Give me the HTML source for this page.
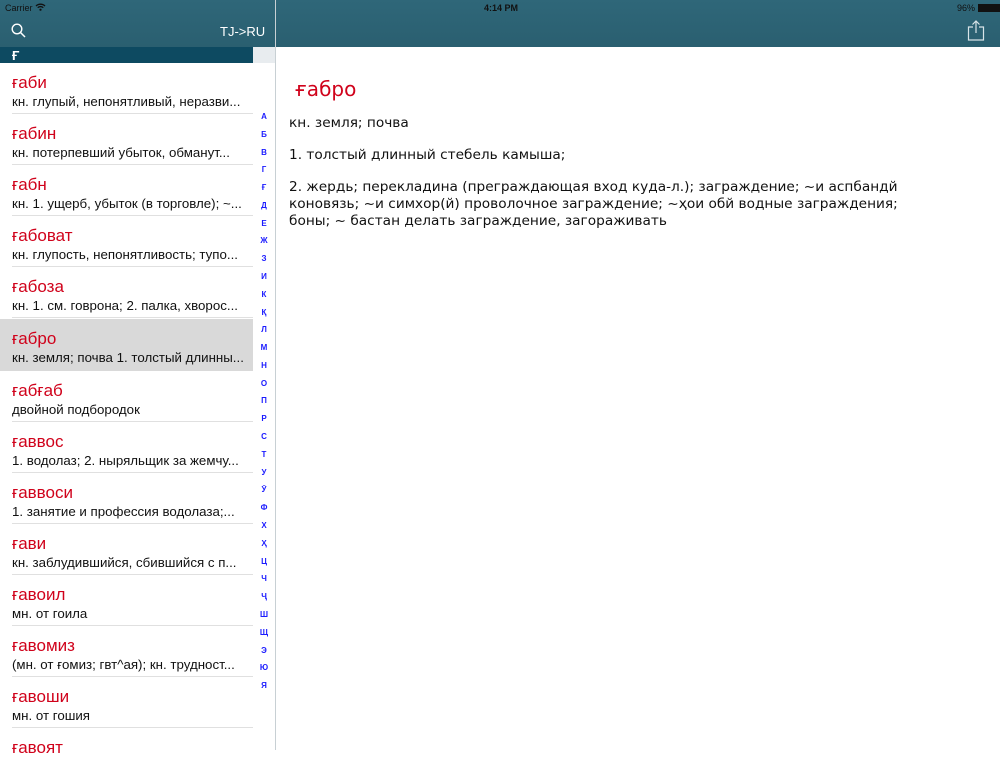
<!DOCTYPE html>
<html><head><meta charset="utf-8"><style>
*{margin:0;padding:0;box-sizing:border-box}
body{width:1000px;height:750px;overflow:hidden;background:#fff;font-family:"Liberation Sans","DejaVu Sans",sans-serif;position:relative}
.hdr{position:absolute;left:0;top:0;width:1000px;height:47px;background:linear-gradient(#2f6779,#2a5f70)}
.status{position:absolute;top:3px;font-size:9px;color:#111}
.div{position:absolute;left:275px;top:0;width:1px;height:750px;background:#c8d0d4}
.sec{position:absolute;left:0;top:47px;width:253px;height:16px;background:#0d4a61;color:#fff;font-size:13px;font-weight:bold;padding-left:12px;line-height:17px}
.secr{position:absolute;left:253px;top:47px;width:22px;height:16px;background:#e8ecef}
.row{position:absolute;left:0;width:253px;height:51px}
.row.sel{background:#d9d9d9}
.row .t{position:absolute;left:12px;top:10px;font-size:17px;color:#d0021b}
.row .s{position:absolute;left:12px;top:31px;font-size:13.3px;color:#111;white-space:nowrap}
.row .l{position:absolute;left:12px;right:0;bottom:0;height:1px;background:#e0e0e0}
.idx{position:absolute;left:255px;width:18px;text-align:center;font-size:8px;font-weight:bold;color:#1a1aff}
.det{position:absolute;left:289px;font-family:"DejaVu Sans",sans-serif;font-size:13.7px;color:#111;line-height:17px;white-space:nowrap}
</style></head><body>
<div class="hdr"></div>
<div class="status" style="left:5px">Carrier <svg width="11" height="8" viewBox="0 0 11 8"><path d="M1 3a6.5 6.5 0 0 1 9 0M2.7 4.7a4 4 0 0 1 5.6 0" stroke="#111" stroke-width="1.3" fill="none"/><circle cx="5.5" cy="6.7" r="1.1" fill="#111"/></svg></div>
<div class="status" style="left:484px;font-weight:bold">4:14 PM</div>
<div class="status" style="left:957px">96% <span style="display:inline-block;width:22px;height:8px;background:#111;vertical-align:-1px"></span></div>
<svg style="position:absolute;left:11px;top:23px" width="15" height="15" viewBox="0 0 15 15"><circle cx="6" cy="6" r="4.8" stroke="#fff" stroke-width="1.4" fill="none"/><path d="M9.5 9.5L14 14" stroke="#fff" stroke-width="1.5"/></svg>
<div style="position:absolute;left:220px;top:24px;color:#fff;font-size:13px">TJ-&gt;RU</div>
<svg style="position:absolute;left:967px;top:20px" width="18" height="21" viewBox="0 0 18 21"><path d="M6 7H1.5V20H16.5V7H12M9 1V13M5.5 4.5L9 1L12.5 4.5" stroke="#d8e4e8" stroke-width="1.2" fill="none"/></svg>
<div class="div"></div>
<div class="sec">Ғ</div><div class="secr"></div>

<div class="row" style="top:63px"><div class="t">ғаби</div><div class="s">кн. глупый, непонятливый, неразви...</div><div class="l"></div></div>
<div class="row" style="top:114px"><div class="t">ғабин</div><div class="s">кн. потерпевший убыток, обманут...</div><div class="l"></div></div>
<div class="row" style="top:165px"><div class="t">ғабн</div><div class="s">кн. 1. ущерб, убыток (в торговле); ~...</div><div class="l"></div></div>
<div class="row" style="top:216px"><div class="t">ғабоват</div><div class="s">кн. глупость, непонятливость; тупо...</div><div class="l"></div></div>
<div class="row" style="top:267px"><div class="t">ғабоза</div><div class="s">кн. 1. см. говрона; 2. палка, хворос...</div><div class="l"></div></div>
<div class="row sel" style="top:319px;height:52px"><div class="t" style="top:10px">ғабро</div><div class="s" style="top:31px">кн. земля; почва 1. толстый длинны...</div></div>
<div class="row" style="top:371px"><div class="t">ғабғаб</div><div class="s">двойной подбородок</div><div class="l"></div></div>
<div class="row" style="top:422px"><div class="t">ғаввос</div><div class="s">1. водолаз; 2. ныряльщик за жемчу...</div><div class="l"></div></div>
<div class="row" style="top:473px"><div class="t">ғаввоси</div><div class="s">1. занятие и профессия водолаза;...</div><div class="l"></div></div>
<div class="row" style="top:524px"><div class="t">ғави</div><div class="s">кн. заблудившийся, сбившийся с п...</div><div class="l"></div></div>
<div class="row" style="top:575px"><div class="t">ғавоил</div><div class="s">мн. от гоила</div><div class="l"></div></div>
<div class="row" style="top:626px"><div class="t">ғавомиз</div><div class="s">(мн. от ғомиз; гвт^ая); кн. трудност...</div><div class="l"></div></div>
<div class="row" style="top:677px"><div class="t">ғавоши</div><div class="s">мн. от гошия</div><div class="l"></div></div>
<div class="row" style="top:728px"><div class="t">ғавоят</div></div>

<div class="idx" style="top:112px">А</div><div class="idx" style="top:130px">Б</div><div class="idx" style="top:148px">В</div><div class="idx" style="top:165px">Г</div><div class="idx" style="top:183px">Ғ</div><div class="idx" style="top:201px">Д</div><div class="idx" style="top:219px">Е</div><div class="idx" style="top:236px">Ж</div><div class="idx" style="top:254px">З</div><div class="idx" style="top:272px">И</div><div class="idx" style="top:290px">К</div><div class="idx" style="top:308px">Қ</div><div class="idx" style="top:325px">Л</div><div class="idx" style="top:343px">М</div><div class="idx" style="top:361px">Н</div><div class="idx" style="top:379px">О</div><div class="idx" style="top:396px">П</div><div class="idx" style="top:414px">Р</div><div class="idx" style="top:432px">С</div><div class="idx" style="top:450px">Т</div><div class="idx" style="top:468px">У</div><div class="idx" style="top:485px">Ӯ</div><div class="idx" style="top:503px">Ф</div><div class="idx" style="top:521px">Х</div><div class="idx" style="top:539px">Ҳ</div><div class="idx" style="top:557px">Ц</div><div class="idx" style="top:574px">Ч</div><div class="idx" style="top:592px">Ҷ</div><div class="idx" style="top:610px">Ш</div><div class="idx" style="top:628px">Щ</div><div class="idx" style="top:646px">Э</div><div class="idx" style="top:663px">Ю</div><div class="idx" style="top:681px">Я</div>

<div style="position:absolute;left:295px;top:77px;font-size:20px;color:#d0021b;font-family:'DejaVu Sans',sans-serif">ғабро</div>
<div class="det" style="top:115px">кн. земля; почва</div>
<div class="det" style="top:147px">1. толстый длинный стебель камыша;</div>
<div class="det" style="top:179px">2. жердь; перекладина (преграждающая вход куда-л.); заграждение; ~и аспбандй<br>коновязь; ~и симхор(й) проволочное заграждение; ~ҳои обй водные заграждения;<br>боны; ~ бастан делать заграждение, загораживать</div>
</body></html>
